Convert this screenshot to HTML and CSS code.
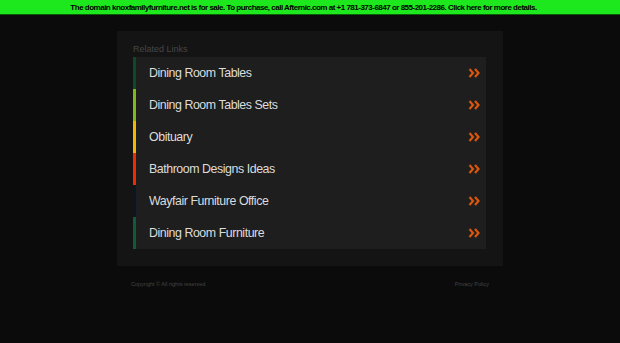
FILE: index.html
```html
<!DOCTYPE html>
<html>
<head>
<meta charset="utf-8">
<link rel="stylesheet" href="styles.css">
</head>
<body>
<div class="topbar">The domain knoxfamilyfurniture.net is for sale. To purchase, call Afternic.com at +1 781-373-6847 or 855-201-2286. Click here for more details.</div>
<div class="box">
  <div class="title">Related Links</div>
  <ul class="links">
    <li class="c1"><span>Dining Room Tables</span><svg class="arr" viewBox="0 0 13 10"><path d="M1.5 1l3.5 4-3.5 4M7 1l3.5 4L7 9"/></svg></li>
    <li class="c2"><span>Dining Room Tables Sets</span><svg class="arr" viewBox="0 0 13 10"><path d="M1.5 1l3.5 4-3.5 4M7 1l3.5 4L7 9"/></svg></li>
    <li class="c3"><span>Obituary</span><svg class="arr" viewBox="0 0 13 10"><path d="M1.5 1l3.5 4-3.5 4M7 1l3.5 4L7 9"/></svg></li>
    <li class="c4"><span>Bathroom Designs Ideas</span><svg class="arr" viewBox="0 0 13 10"><path d="M1.5 1l3.5 4-3.5 4M7 1l3.5 4L7 9"/></svg></li>
    <li class="c5"><span>Wayfair Furniture Office</span><svg class="arr" viewBox="0 0 13 10"><path d="M1.5 1l3.5 4-3.5 4M7 1l3.5 4L7 9"/></svg></li>
    <li class="c6"><span>Dining Room Furniture</span><svg class="arr" viewBox="0 0 13 10"><path d="M1.5 1l3.5 4-3.5 4M7 1l3.5 4L7 9"/></svg></li>
  </ul>
</div>
<div class="footer"><span>Copyright © All rights reserved</span><span>Privacy Policy</span></div>
</body>
</html>
```
FILE: styles.css
```css
html, body { margin: 0; padding: 0; background: #0b0b0b; font-family: "Liberation Sans", Arial, sans-serif; }
.topbar {
  height: 15px; background: #1de81d; color: #000; font-weight: bold; font-size: 8px; padding-right: 13px;
  line-height: 15px; text-align: center; letter-spacing: -0.5px; border-bottom: 1px solid #0a5a0a; box-sizing: border-box;
}
.box { width: 386px; margin: 16px auto 0; background: #141414; padding: 11px 17px 17px 16px; box-sizing: border-box; }
.title { font-size: 9px; color: #464646; line-height: 15px; height: 15px; }
.links { list-style: none; margin: 0; padding: 0; background: #1e1e1e; }
.links li { height: 32px; display: flex; align-items: center; justify-content: space-between; border-left: 3px solid #333; padding: 0 5px 0 13px; }
.links span { font-size: 12.4px; color: #dcdcdc; letter-spacing: -0.45px; }
.arr { width: 13px; height: 10px; fill: none; stroke: #d9560b; stroke-width: 2.2; }
.c1 { border-left-color: #0b4a2c !important; }
.c2 { border-left-color: #7dba18 !important; }
.c3 { border-left-color: #f4b700 !important; }
.c4 { border-left-color: #f22a00 !important; }
.c5 { border-left-color: #0a1722 !important; }
.c6 { border-left-color: #0f5c3c !important; }
.footer { width: 358px; margin: 15px auto 0; display: flex; justify-content: space-between; font-size: 5.5px; color: #444; }
```
